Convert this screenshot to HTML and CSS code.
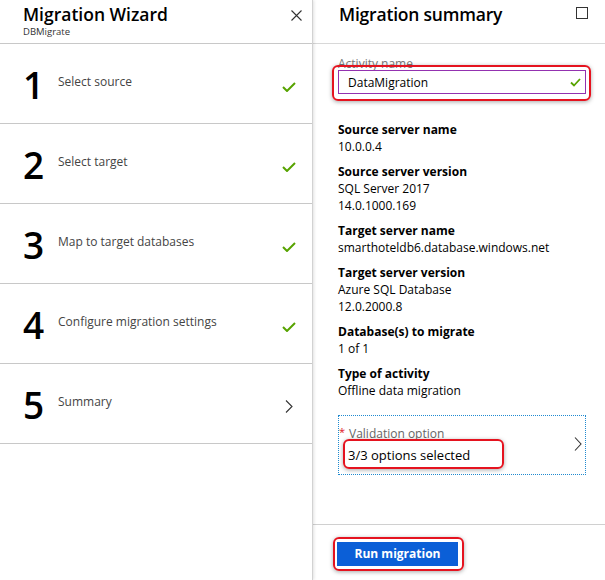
FILE: index.html
```html
<!DOCTYPE html>
<html lang="en">
<head>
<meta charset="utf-8">
<title>Migration Wizard</title>
<link rel="stylesheet" href="styles.css">
</head>
<body>
<div class="app">
  <aside class="wizard">
    <header class="wiz-head">
      <div class="titles">
        <h1 class="title">Migration Wizard</h1>
        <div class="subtitle">DBMigrate</div>
      </div>
      <svg class="close" width="11" height="11" viewBox="0 0 11 11"><path d="M0.5 0.5 L10.5 10.5 M10.5 0.5 L0.5 10.5" stroke="#333" stroke-width="1.1" fill="none"/></svg>
    </header>
    <ol class="steps">
      <li class="step"><span class="num">1</span><span class="label">Select source</span><svg class="check" width="14" height="10" viewBox="0 0 14 10"><path d="M1 5 L5 9 L13 1" stroke="#57a300" stroke-width="2" fill="none"/></svg></li>
      <li class="step"><span class="num">2</span><span class="label">Select target</span><svg class="check" width="14" height="10" viewBox="0 0 14 10"><path d="M1 5 L5 9 L13 1" stroke="#57a300" stroke-width="2" fill="none"/></svg></li>
      <li class="step"><span class="num">3</span><span class="label">Map to target databases</span><svg class="check" width="14" height="10" viewBox="0 0 14 10"><path d="M1 5 L5 9 L13 1" stroke="#57a300" stroke-width="2" fill="none"/></svg></li>
      <li class="step"><span class="num">4</span><span class="label">Configure migration settings</span><svg class="check" width="14" height="10" viewBox="0 0 14 10"><path d="M1 5 L5 9 L13 1" stroke="#57a300" stroke-width="2" fill="none"/></svg></li>
      <li class="step"><span class="num">5</span><span class="label">Summary</span><svg class="chev" width="8" height="13" viewBox="0 0 8 13"><path d="M1 0.5 L7 6.5 L1 12.5" stroke="#333" stroke-width="1.1" fill="none"/></svg></li>
    </ol>
  </aside>
  <section class="summary">
    <header class="sum-head">
      <h2 class="title title-sum">Migration summary</h2>
      <span class="maximize"></span>
    </header>
    <div class="sum-body">
      <div class="field">
        <label class="field-label">Activity name</label>
        <div class="input-wrap">
          <div class="input"><span class="input-text">DataMigration</span><svg width="11" height="9" viewBox="0 0 11 9"><path d="M1 4.5 L4 7.5 L10 1" stroke="#57a300" stroke-width="1.8" fill="none"/></svg></div>
          <span class="highlight hl-input"></span>
        </div>
      </div>
      <dl class="details">
        <div class="group"><dt>Source server name</dt><dd>10.0.0.4</dd></div>
        <div class="group"><dt>Source server version</dt><dd>SQL Server 2017</dd><dd>14.0.1000.169</dd></div>
        <div class="group"><dt>Target server name</dt><dd>smarthoteldb6.database.windows.net</dd></div>
        <div class="group"><dt>Target server version</dt><dd>Azure SQL Database</dd><dd>12.0.2000.8</dd></div>
        <div class="group"><dt>Database(s) to migrate</dt><dd>1 of 1</dd></div>
        <div class="group"><dt>Type of activity</dt><dd>Offline data migration</dd></div>
      </dl>
      <div class="validation">
        <div class="val-text">
          <div class="val-label"><span class="req">*</span>Validation option</div>
          <div class="val-value">3/3 options selected</div>
        </div>
        <svg class="val-chev" width="8" height="14" viewBox="0 0 8 14"><path d="M1 0.5 L7 7 L1 13.5" stroke="#333" stroke-width="1.1" fill="none"/></svg>
        <span class="highlight hl-val"></span>
      </div>
    </div>
    <footer class="sum-foot">
      <div class="btn-wrap">
        <button class="primary">Run migration</button>
        <span class="highlight hl-btn"></span>
      </div>
    </footer>
  </section>
</div>
</body>
</html>
```

FILE: styles.css
```css
body {
  margin: 0;
  font-family: "Open Sans", "Noto Sans", sans-serif;
  color: #000;
  background: #fff;
}
.app {
  display: flex;
  width: 605px;
  height: 580px;
  overflow: hidden;
}
.wizard {
  width: 313px;
  flex: none;
  box-sizing: border-box;
  border-right: 1px solid #d2d2d2;
  box-shadow: 1px 0 3px rgba(0, 0, 0, 0.12);
  position: relative;
  z-index: 1;
  background: #fff;
}
.wiz-head {
  height: 43px;
  border-bottom: 1px solid #c8c8c8;
  display: flex;
  justify-content: space-between;
  align-items: flex-start;
  padding-left: 23px;
}
.title {
  margin: 0;
  padding-top: 4px;
  font-size: 17.5px;
  font-weight: 600;
  line-height: 21px;
}
.title-sum {
  padding-left: 1px;
  letter-spacing: -0.2px;
}
.subtitle {
  margin-top: 2px;
  font-size: 9.5px;
  line-height: 10px;
  color: #333;
}
.close {
  margin: 10px 10px 0 0;
}
.steps {
  list-style: none;
  margin: 0;
  padding: 0;
}
.step {
  height: 80px;
  box-sizing: border-box;
  border-bottom: 1px solid #c8c8c8;
  display: flex;
  align-items: flex-start;
  padding: 22px 16px 0 23px;
}
.num {
  width: 35px;
  flex: none;
  font-size: 37px;
  font-weight: 600;
  line-height: 38px;
}
.label {
  flex: 1;
  font-size: 12px;
  line-height: 16px;
  margin-top: 8px;
  color: #444;
}
.check {
  margin-top: 16px;
}
.chev {
  margin: 14px 3px 0 0;
}
.summary {
  flex: 1;
  display: flex;
  flex-direction: column;
  min-width: 0;
}
.sum-head {
  height: 43px;
  flex: none;
  border-bottom: 1px solid #d8d8d8;
  display: flex;
  justify-content: space-between;
  align-items: flex-start;
  padding-left: 25px;
}
.maximize {
  width: 12px;
  height: 12px;
  box-sizing: border-box;
  border: 1.5px solid #333;
  margin: 7px 17px 0 0;
}
.sum-body {
  flex: 1;
  padding: 13px 19px 0 25px;
}
.field-label {
  display: block;
  font-size: 12px;
  line-height: 14px;
  color: #777;
}
.input-wrap {
  position: relative;
  margin-top: -1px;
}
.input {
  height: 24px;
  box-sizing: border-box;
  border: 1px solid #9332b0;
  display: flex;
  align-items: center;
  justify-content: space-between;
  padding: 0 4px 0 9px;
  font-size: 12px;
  background: #fff;
}
.details {
  margin: 27px 0 0;
  font-size: 12px;
  line-height: 17px;
}
.group + .group {
  margin-top: 8px;
}
.details dt {
  font-weight: 700;
}
.details dd {
  margin: 0;
}
.validation {
  margin-top: 16px;
  height: 60px;
  box-sizing: border-box;
  border: 1px dotted #1f8ad0;
  display: flex;
  align-items: center;
  padding: 0 3px 0 9px;
  position: relative;
}
.val-text {
  flex: 1;
}
.val-label {
  font-size: 12px;
  line-height: 14px;
  color: #666;
  margin-left: -9px;
}
.req {
  display: inline-block;
  width: 10px;
  color: #e0141e;
  font-size: 11px;
  vertical-align: 2px;
}
.val-value {
  margin-top: 4px;
  font-size: 13px;
  line-height: 20px;
}
.val-chev {
  margin-top: -3px;
}
.sum-foot {
  height: 56px;
  flex: none;
  box-sizing: border-box;
  border-top: 1px solid #d0d0d0;
  padding: 16px 0 0 24px;
}
.btn-wrap {
  position: relative;
  display: inline-block;
}
.primary {
  display: block;
  width: 121px;
  height: 24px;
  padding: 0;
  border: 0;
  background: #0b5fd7;
  color: #fff;
  font-family: "Open Sans", "Noto Sans", sans-serif;
  font-size: 12px;
  font-weight: 700;
}
.highlight {
  position: absolute;
  border: 2px solid #e5131f;
  border-radius: 6px;
  box-shadow: 0 1px 4px rgba(0, 0, 0, 0.35);
  pointer-events: none;
}
.hl-input {
  top: -5px;
  left: -6px;
  right: -5px;
  bottom: -7px;
}
.hl-val {
  left: 4px;
  top: 23px;
  width: 161px;
  height: 30px;
  box-sizing: border-box;
}
.hl-btn {
  top: -5px;
  left: -4px;
  right: -6px;
  bottom: -5px;
}
```
